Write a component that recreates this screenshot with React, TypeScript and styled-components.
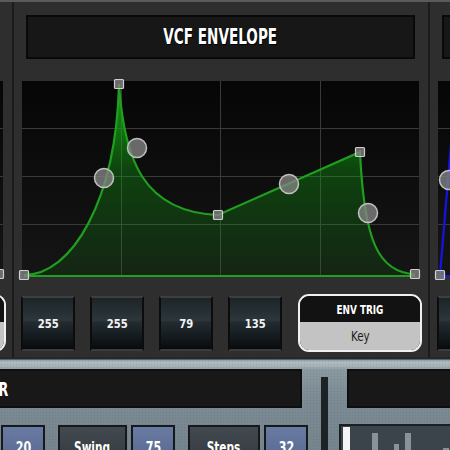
import React from "react";
import styled, { createGlobalStyle } from "styled-components";

const Global = createGlobalStyle`
  html, body { margin: 0; padding: 0; background: #2d2d2d; }
  body {
    width: 450px; height: 450px; overflow: hidden;
    font-family: "DejaVu Sans Condensed", "DejaVu Sans", "Liberation Sans", sans-serif;
  }
`;

const Screen = styled.div`
  width: 450px;
  height: 450px;
  overflow: hidden;
  display: flex;
  flex-direction: column;
  background: #2d2d2d;
`;

const Narrow = styled.span<{ $sx: number; $origin?: string }>`
  display: inline-block;
  white-space: nowrap;
  transform: scaleX(${(p) => p.$sx});
  transform-origin: ${(p) => p.$origin ?? "center"} center;
`;

const Top = styled.div`
  flex: 0 0 357px;
  box-sizing: border-box;
  display: flex;
  border-top: 2px solid #5a5a5a;
  background: #2a2a2a;
`;

const SideClip = styled.div<{ $side: "left" | "right" }>`
  flex: ${(p) => (p.$side === "left" ? "0 0 12px" : "1 1 auto")};
  min-width: 0;
  overflow: hidden;
  display: flex;
  justify-content: ${(p) => (p.$side === "left" ? "flex-end" : "flex-start")};
`;

const Separator = styled.div`
  flex: 0 0 2px;
  background: #1b1b1b;
`;

const PanelBox = styled.div`
  flex: 0 0 414px;
  width: 414px;
  box-sizing: border-box;
  padding: 13px 9px 0 8px;
  display: flex;
  flex-direction: column;
  background: #2e2e2e;
`;

const TitleBox = styled.div`
  margin: 0 4px;
  height: 44px;
  box-sizing: border-box;
  border: 2px solid #090909;
  background: #171717;
  display: flex;
  align-items: center;
  justify-content: center;
  color: #ffffff;
  font-weight: bold;
  font-size: 21px;
  text-shadow: 0 0 1px #000, 1px 1px 0 #000;
`;

const Graph = styled.div`
  margin-top: 22px;
  height: 196px;
  background: linear-gradient(to bottom, #060606, #151515);
`;

const GraphSvg = styled.svg`
  display: block;
  overflow: visible;
`;

const Controls = styled.div`
  margin: 17px -3px 0 -1px;
  height: 58px;
  display: flex;
  align-items: center;
  gap: 15px;
`;

const ValueBox = styled.div`
  flex: 0 0 54px;
  height: 55px;
  box-sizing: border-box;
  border: 2px solid #0c0c0c;
  border-top-color: #3e3e3e;
  border-bottom-color: #3c3c3c;
  background: linear-gradient(
    to bottom,
    #1d2427 0%,
    #2c373c 44%,
    #232c31 47%,
    #161d21 72%,
    #080b0d 100%
  );
  display: flex;
  align-items: center;
  justify-content: center;
  color: #f2f2f2;
  font-weight: bold;
  font-size: 13px;
`;

const TrigButton = styled.div`
  margin-left: 1px;
  flex: 0 0 124px;
  height: 58px;
  box-sizing: border-box;
  border: 2px solid #f0f0f0;
  border-radius: 11px;
  overflow: hidden;
  display: flex;
  flex-direction: column;
`;

const TrigLabel = styled.div`
  flex: 0 0 26px;
  background: #121212;
  color: #ffffff;
  font-weight: bold;
  font-size: 13px;
  display: flex;
  align-items: center;
  justify-content: center;
`;

const TrigValue = styled.div`
  flex: 1;
  background: #c3c3c3;
  color: #1c1c1c;
  font-size: 14px;
  display: flex;
  align-items: center;
  justify-content: center;
`;

/* ---------- bottom section ---------- */

const Bottom = styled.div`
  flex: 1;
  display: flex;
  padding-top: 12px;
  box-sizing: border-box;
  background:
    radial-gradient(circle, rgba(0, 0, 0, 0.08) 0.8px, transparent 1px) 0 0 / 3px 3px,
    linear-gradient(
      to bottom,
      #23292c 0px,
      #23292c 2px,
      #8c9aa2 3px,
      #b2bdc3 5px,
      #a6b2b8 9px,
      #8a98a0 13px,
      #7d8b94 40px,
      #74828b 100%
    );
`;

const LeftGroup = styled.div`
  margin-left: -72px;
  flex: 0 0 380px;
  min-width: 0;
  display: flex;
  flex-direction: column;
  gap: 17px;
`;

const SectionTitle = styled.div<{ $pad?: number }>`
  height: 39px;
  box-sizing: border-box;
  border: 2px solid #0e0e0e;
  background: #181818;
  display: flex;
  align-items: center;
  justify-content: flex-end;
  padding-right: ${(p) => p.$pad ?? 0}px;
  color: #fff;
  font-weight: bold;
  font-size: 19px;
  white-space: nowrap;
`;

const LeftTitle = styled(SectionTitle)`
  margin-right: 6px;
`;

const ParamRow = styled.div`
  display: flex;
  gap: 13px;
`;

const ParamPair = styled.div`
  display: flex;
  gap: 4px;
`;

const ParamCell = styled.div<{ $w: number; $value?: boolean }>`
  flex: 0 0 ${(p) => p.$w}px;
  height: 34px;
  box-sizing: border-box;
  border: 2px solid #15191c;
  background: ${(p) =>
    p.$value
      ? "linear-gradient(to bottom, #6a7ba3, #5a6a93)"
      : "linear-gradient(to bottom, #434a4f, #363c41)"};
  color: #ffffff;
  font-weight: bold;
  font-size: 15px;
  display: flex;
  justify-content: center;
  padding-top: 12px;
`;

const Divider = styled.div`
  margin: 8px 0 0 13px;
  flex: 0 0 7px;
  background: #1d2225;
`;

const RightGroup = styled.div`
  margin-left: 11px;
  flex: 1;
  display: flex;
  flex-direction: column;
  gap: 16px;
  min-width: 0;
`;

const RightTitle = styled(SectionTitle)`
  margin-left: 8px;
  margin-right: -40px;
`;

const SeqBox = styled.div`
  height: 40px;
  margin-right: -20px;
  box-sizing: border-box;
  border: 2px solid #1a1f22;
  border-bottom: none;
  background: #3b444a;
  display: flex;
  align-items: flex-end;
  padding-left: 1px;
`;

const SeqBar = styled.div<{ $h: number; $ml: number; $w: number; $bright?: boolean }>`
  flex: 0 0 ${(p) => p.$w}px;
  height: ${(p) => p.$h}px;
  margin-left: ${(p) => p.$ml}px;
  background: ${(p) => (p.$bright ? "#f4f4f4" : "#8a9297")};
`;

/* ---------- envelope drawing ---------- */

type Marker = { x: number; y: number; kind: "sq" | "ci" };
type Envelope = {
  stroke: string;
  fillId?: string;
  fillTop?: string;
  d: string;
  baseline: boolean;
  markers: Marker[];
};

const GW = 397;
const GH = 196;

const EnvGraph: React.FC<{ env: Envelope }> = ({ env }) => {
  const vLines = [99, 198, 298];
  const hLines = [47, 95, 143];
  return (
    <Graph>
      <GraphSvg width={GW} height={GH} viewBox={`0 0 ${GW} ${GH}`}>
        <defs>
          {env.fillId && (
            <linearGradient id={env.fillId} x1="0" y1="0" x2="0" y2="1">
              <stop offset="0" stopColor={env.fillTop} stopOpacity="0.95" />
              <stop offset="0.45" stopColor={env.fillTop} stopOpacity="0.33" />
              <stop offset="1" stopColor={env.fillTop} stopOpacity="0.1" />
            </linearGradient>
          )}
        </defs>
        {vLines.map((x) => (
          <line key={"v" + x} x1={x + 0.5} y1={0} x2={x + 0.5} y2={GH} stroke="#3a3a3a" strokeWidth="1" />
        ))}
        {hLines.map((y) => (
          <line key={"h" + y} x1={0} y1={y + 0.5} x2={GW} y2={y + 0.5} stroke="#3a3a3a" strokeWidth="1" />
        ))}
        {env.fillId && env.d && (
          <path d={`${env.d} L393,195 L2,195 Z`} fill={`url(#${env.fillId})`} stroke="none" />
        )}
        {env.baseline && (
          <line x1={2} y1={195} x2={393} y2={195} stroke={env.stroke} strokeWidth="2" />
        )}
        {env.d && <path d={env.d} fill="none" stroke={env.stroke} strokeWidth="2.2" />}
        {env.markers.map((m, i) =>
          m.kind === "sq" ? (
            <rect
              key={i}
              x={m.x - 4.5}
              y={m.y - 4.5}
              width={9}
              height={9}
              rx={1}
              fill="rgba(130,130,130,0.8)"
              stroke="#cfcfcf"
              strokeWidth="1.2"
            />
          ) : (
            <circle
              key={i}
              cx={m.x}
              cy={m.y}
              r={9.5}
              fill="rgba(132,132,132,0.78)"
              stroke="#c0c0c0"
              strokeWidth="1.5"
            />
          )
        )}
      </GraphSvg>
    </Graph>
  );
};

const vcfEnv: Envelope = {
  stroke: "#1f9e1f",
  fillId: "vcfFill",
  fillTop: "#12b012",
  d: "M2,194 C50,194 94,120 97,3 C102,80 122,131 196,134 L338,71 C342,159 356,192 393,193",
  baseline: true,
  markers: [
    { x: 2, y: 194, kind: "sq" },
    { x: 82, y: 97, kind: "ci" },
    { x: 97, y: 3, kind: "sq" },
    { x: 115, y: 67, kind: "ci" },
    { x: 196, y: 134, kind: "sq" },
    { x: 267, y: 103, kind: "ci" },
    { x: 338, y: 71, kind: "sq" },
    { x: 346, y: 132, kind: "ci" },
    { x: 393, y: 193, kind: "sq" },
  ],
};

const leftEnv: Envelope = {
  stroke: "#6a6a6a",
  d: "",
  baseline: false,
  markers: [{ x: 393, y: 193, kind: "sq" }],
};

const rightEnv: Envelope = {
  stroke: "#1414e6",
  d: "M2,194 L18,3",
  baseline: true,
  markers: [
    { x: 2, y: 194, kind: "sq" },
    { x: 11, y: 99, kind: "ci" },
  ],
};

type PanelProps = {
  title: string;
  env: Envelope;
  values: string[];
  trig: string;
};

const Panel: React.FC<PanelProps> = ({ title, env, values, trig }) => (
  <PanelBox>
    <TitleBox>
      <Narrow $sx={0.72}>{title}</Narrow>
    </TitleBox>
    <EnvGraph env={env} />
    <Controls>
      {values.map((v, i) => (
        <ValueBox key={i}>
          <Narrow $sx={0.86}>{v}</Narrow>
        </ValueBox>
      ))}
      <TrigButton>
        <TrigLabel>
          <Narrow $sx={0.76}>ENV TRIG</Narrow>
        </TrigLabel>
        <TrigValue>
          <Narrow $sx={0.82}>{trig}</Narrow>
        </TrigValue>
      </TrigButton>
    </Controls>
  </PanelBox>
);

const seqBars = [
  { h: 37, ml: 1, w: 7, bright: true },
  { h: 31, ml: 22, w: 6 },
  { h: 20, ml: 16, w: 5 },
  { h: 31, ml: 6, w: 6 },
  { h: 16, ml: 32, w: 6 },
];

const params = [
  { label: "Rate", lw: 69, value: "20" },
  { label: "Swing", lw: 69, value: "75" },
  { label: "Steps", lw: 72, value: "32" },
];

export default function App() {
  return (
    <Screen>
      <Global />
      <Top>
        <SideClip $side="left">
          <Panel title="VCA ENVELOPE" env={leftEnv} values={["0", "0", "0", "0"]} trig="Key" />
        </SideClip>
        <Separator />
        <Panel title="VCF ENVELOPE" env={vcfEnv} values={["255", "255", "79", "135"]} trig="Key" />
        <Separator />
        <SideClip $side="right">
          <Panel title="VCA ENVELOPE" env={rightEnv} values={["0", "0", "0", "0"]} trig="Key" />
        </SideClip>
      </Top>
      <Bottom>
        <LeftGroup>
          <LeftTitle $pad={292}>
            <Narrow $sx={0.74} $origin="right">
              ARPEGGIATOR
            </Narrow>
          </LeftTitle>
          <ParamRow>
            {params.map((p) => (
              <ParamPair key={p.label}>
                <ParamCell $w={p.lw}>
                  <Narrow $sx={0.78}>{p.label}</Narrow>
                </ParamCell>
                <ParamCell $w={44} $value>
                  <Narrow $sx={0.82}>{p.value}</Narrow>
                </ParamCell>
              </ParamPair>
            ))}
          </ParamRow>
        </LeftGroup>
        <Divider />
        <RightGroup>
          <RightTitle>&nbsp;</RightTitle>
          <SeqBox>
            {seqBars.map((b, i) => (
              <SeqBar key={i} $h={b.h} $ml={b.ml} $w={b.w} $bright={b.bright} />
            ))}
          </SeqBox>
        </RightGroup>
      </Bottom>
    </Screen>
  );
}
